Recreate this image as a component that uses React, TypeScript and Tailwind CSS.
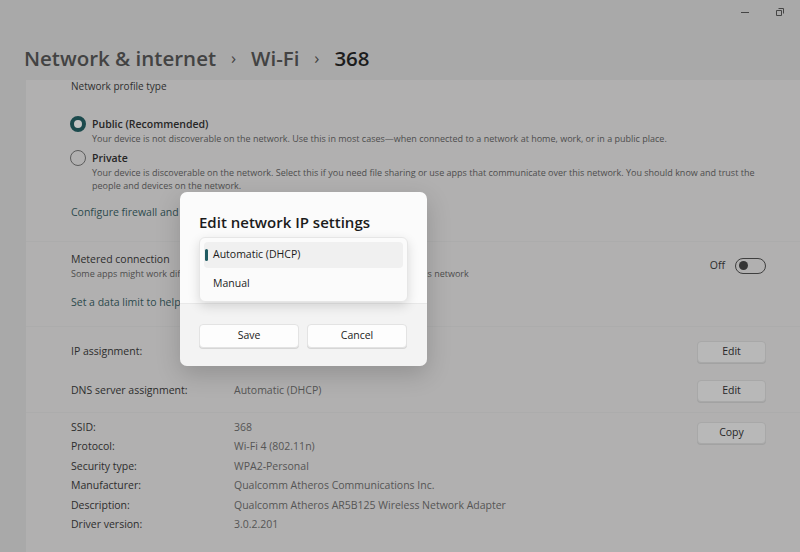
import React from 'react'

const font = { fontFamily: '"Open Sans", "Noto Sans", sans-serif' }

function Separator() {
  return <div className="h-px bg-[#acacac]" />
}

function GhostButton({ label }: { label: string }) {
  return (
    <div className="flex h-[22px] w-[69px] items-center justify-center rounded-[4px] border border-[#a8a8a8] bg-[#b8b8b8] text-[10.5px] text-[#262626] shadow-[0_1px_0_#a2a2a2]">
      {label}
    </div>
  )
}

function Radio({ checked }: { checked: boolean }) {
  return checked ? (
    <div className="h-[16px] w-[16px] shrink-0 rounded-full border-[4px] border-[#1c4a4d] bg-[#c4c4c4]" />
  ) : (
    <div className="h-[16px] w-[16px] shrink-0 rounded-full border border-[#5c5c5c]" />
  )
}

const properties: [string, string][] = [
  ['SSID:', '368'],
  ['Protocol:', 'Wi-Fi 4 (802.11n)'],
  ['Security type:', 'WPA2-Personal'],
  ['Manufacturer:', 'Qualcomm Atheros Communications Inc.'],
  ['Description:', 'Qualcomm Atheros AR5B125 Wireless Network Adapter'],
  ['Driver version:', '3.0.2.201'],
]

function Dialog() {
  return (
    <div className="absolute left-[180px] top-[192px] w-[247px] overflow-hidden rounded-[7px] shadow-[0_8px_24px_rgba(0,0,0,0.18)]">
      <div className="relative h-[111px] bg-[#fbfbfb] px-[19px] pt-[20px]">
        <div className="text-[15px] font-semibold leading-[20px] text-[#1b1b1b]">Edit network IP settings</div>
        <div className="absolute left-[19px] top-[45px] z-10 w-[209px] rounded-[6px] border border-[#e6e6e6] bg-[#fbfbfb] p-[4px] shadow-[0_4px_12px_rgba(0,0,0,0.14)]">
          <div className="relative flex h-[26px] items-center rounded-[4px] bg-[#f0f0f0] pl-[9px] text-[10.5px] text-[#1b1b1b]">
            <div className="absolute left-[1px] top-[7px] h-[12px] w-[3px] rounded-full bg-[#1f5a61]" />
            Automatic (DHCP)
          </div>
          <div className="mt-[3px] flex h-[26px] items-center pl-[9px] text-[10.5px] text-[#1b1b1b]">Manual</div>
        </div>
      </div>
      <div className="flex h-[63px] gap-[8px] border-t border-[#e8e8e8] bg-[#f3f3f3] px-[19px] pt-[20px]">
        <div className="flex h-[24px] w-[100px] items-center justify-center rounded-[4px] border border-[#e3e3e3] bg-[#fdfdfd] text-[10.5px] text-[#1b1b1b] shadow-[0_1px_0_#d6d6d6]">
          Save
        </div>
        <div className="flex h-[24px] w-[100px] items-center justify-center rounded-[4px] border border-[#e3e3e3] bg-[#fdfdfd] text-[10.5px] text-[#1b1b1b] shadow-[0_1px_0_#d6d6d6]">
          Cancel
        </div>
      </div>
    </div>
  )
}

export default function App() {
  return (
    <div style={font} className="relative h-[552px] w-[800px] overflow-hidden bg-[#a9a9a9] text-[#2d2d2d]">
      {/* window controls */}
      <div className="flex h-[44px] justify-end gap-[27px] pr-[16px] pt-[8px]">
        <svg width="8" height="8" viewBox="0 0 8 8">
          <path d="M0 4.5h8" stroke="#454545" strokeWidth="1" />
        </svg>
        <svg width="8" height="8" viewBox="0 0 8 8">
          <path d="M0.5 2.5h5v5h-5z" fill="none" stroke="#454545" strokeWidth="1" />
          <path d="M2.5 0.5h5v5" fill="none" stroke="#454545" strokeWidth="1" />
        </svg>
      </div>

      {/* breadcrumb */}
      <div className="flex h-[28px] items-center pl-[24px] text-[20.5px] font-semibold leading-[28px]">
        <span className="text-[#434343]">Network &amp; internet</span>
        <span className="w-[35px] text-center text-[17px] font-normal text-[#434343]">›</span>
        <span className="text-[#434343]">Wi-Fi</span>
        <span className="w-[35px] text-center text-[17px] font-normal text-[#434343]">›</span>
        <span className="text-[#1c1c1c]">368</span>
      </div>

      {/* settings card */}
      <div className="ml-[26px] mt-[10px] bg-[#b1b0b0]">
        {/* profile type */}
        <div className="pl-[45px] pb-[21px]">
          <div className="-mt-[2px] h-[14px] text-[10px] leading-[12px] text-[#2f2f2f]">Network profile type</div>
          <div className="mt-[22px] flex gap-[6px]">
            <div className="-ml-[1px]">
              <Radio checked />
            </div>
            <div>
              <div className="text-[10.5px] font-semibold leading-[16px] text-[#262626]">Public (Recommended)</div>
              <div className="text-[9px] leading-[13px] text-[#4d4d4d]">
                Your device is not discoverable on the network. Use this in most cases—when connected to a network at home, work, or in a public place.
              </div>
            </div>
          </div>
          <div className="mt-[5px] flex gap-[6px]">
            <div className="-ml-[1px]">
              <Radio checked={false} />
            </div>
            <div className="w-[668px]">
              <div className="text-[10.5px] font-semibold leading-[16px] text-[#262626]">Private</div>
              <div className="text-[9px] leading-[13px] text-[#4d4d4d]">
                Your device is discoverable on the network. Select this if you need file sharing or use apps that communicate over this network. You should know and trust the people and devices on the network.
              </div>
            </div>
          </div>
          <div className="mt-[12px] text-[10.5px] leading-[16px] text-[#2c4a4d]">Configure firewall and security settings</div>
        </div>
        <Separator />

        {/* metered */}
        <div className="pl-[45px] pr-[34px] pb-[16px] pt-[9px]">
          <div className="flex items-center justify-between">
            <div>
              <div className="text-[10.5px] leading-[16px] text-[#2d2d2d]">Metered connection</div>
              <div className="text-[9px] leading-[13px] text-[#4d4d4d]">
                Some apps might work differently to reduce data usage when you're connected to this network
              </div>
            </div>
            <div className="flex items-center gap-[10px]">
              <span className="text-[10.5px] text-[#2d2d2d]">Off</span>
              <div className="flex h-[16px] w-[31px] items-center rounded-full border border-[#3f3f3f] pl-[3px]">
                <div className="h-[9px] w-[9px] rounded-full bg-[#353535]" />
              </div>
            </div>
          </div>
          <div className="mt-[14px] text-[10.5px] leading-[16px] text-[#2c4a4d]">
            Set a data limit to help control data usage on this network
          </div>
        </div>
        <Separator />

        {/* ip / dns */}
        <div className="pl-[45px] pr-[34px] pt-[14px] pb-[10px]">
          <div className="flex h-[22px] items-center">
            <div className="w-[163px] text-[10.5px] text-[#2d2d2d]">IP assignment:</div>
            <div className="flex-1" />
            <GhostButton label="Edit" />
          </div>
          <div className="mt-[17px] flex h-[22px] items-center">
            <div className="w-[163px] text-[10.5px] text-[#2d2d2d]">DNS server assignment:</div>
            <div className="flex-1 text-[10.5px] text-[#555]">Automatic (DHCP)</div>
            <GhostButton label="Edit" />
          </div>
        </div>
        <Separator />

        {/* properties */}
        <div className="flex pl-[45px] pr-[34px] pt-[5px] pb-[20px]">
          <div className="flex-1">
            {properties.map(([k, v]) => (
              <div key={k} className="flex h-[19.5px] items-center text-[10.5px]">
                <div className="w-[163px] text-[#2d2d2d]">{k}</div>
                <div className="text-[#555]">{v}</div>
              </div>
            ))}
          </div>
          <div className="mt-[4px]">
            <GhostButton label="Copy" />
          </div>
        </div>
      </div>

      <Dialog />
    </div>
  )
}
